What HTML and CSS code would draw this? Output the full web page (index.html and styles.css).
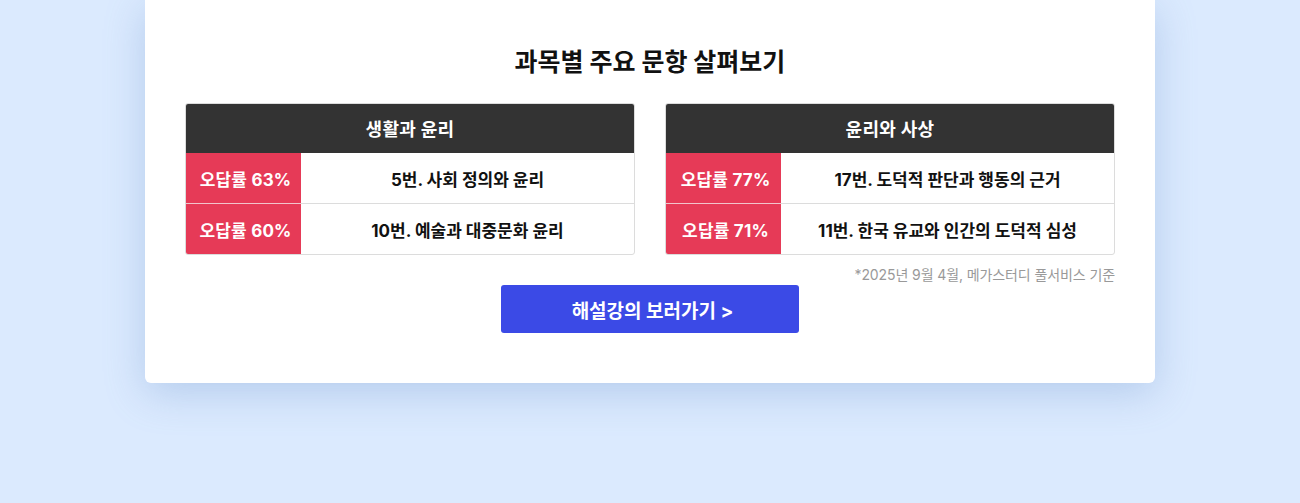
FILE: index.html
```html
<!DOCTYPE html>
<html lang="ko">
<head>
<meta charset="utf-8">
<link rel="stylesheet" href="styles.css">
</head>
<body>
<div class="page">
  <section class="card">
    <h2 class="title">과목별 주요 문항 살펴보기</h2>
    <div class="tables">
      <div class="table">
        <div class="thead">생활과 윤리</div>
        <div class="row">
          <div class="rate">오답률 63%</div>
          <div class="q">5번. 사회 정의와 윤리</div>
        </div>
        <div class="row">
          <div class="rate">오답률 60%</div>
          <div class="q">10번. 예술과 대중문화 윤리</div>
        </div>
      </div>
      <div class="table">
        <div class="thead">윤리와 사상</div>
        <div class="row">
          <div class="rate">오답률 77%</div>
          <div class="q">17번. 도덕적 판단과 행동의 근거</div>
        </div>
        <div class="row">
          <div class="rate">오답률 71%</div>
          <div class="q">11번. 한국 유교와 인간의 도덕적 심성</div>
        </div>
      </div>
    </div>
    <p class="note">*2025년 9월 4월, 메가스터디 풀서비스 기준</p>
    <div class="btn-wrap"><a class="btn" href="#">해설강의 보러가기 &gt;</a></div>
  </section>
</div>
</body>
</html>
```
FILE: styles.css
```css
* { box-sizing: border-box; }
html, body { margin: 0; padding: 0; }
body {
  background: #dbeafe;
  font-family: "Inter", "Noto Sans CJK KR", sans-serif;
  width: 1300px;
  height: 503px;
  overflow: hidden;
}
.page { display: flex; justify-content: center; }
.card {
  width: 1010px;
  background: #fff;
  border-radius: 0 0 6px 6px;
  box-shadow: 0 10px 40px rgba(100, 140, 200, 0.32);
  padding: 45px 40px 50px;
}
.title {
  margin: 0 0 24px;
  text-align: center;
  font-size: 25px;
  line-height: 34px;
  font-weight: 700;
  color: #111;
}
.tables { display: flex; gap: 30px; }
.table {
  flex: 1;
  border: 1px solid #dcdcdc;
  border-radius: 3px;
  overflow: hidden;
}
.thead {
  background: #333;
  color: #fff;
  display: flex;
  align-items: center;
  justify-content: center;
  font-size: 18px;
  font-weight: 700;
  margin: -1px -1px 0;
  height: 50px;
  letter-spacing: 0.3px;
}
.row { display: flex; height: 50px; }
.row + .row { border-top: 1px solid #dcdcdc; height: 51px; }
.row + .row .rate { box-shadow: 0 -1px 0 #f2c4cc; }
.rate {
  background: #e63a57;
  color: #fff;
  display: flex;
  align-items: center;
  justify-content: center;
  font-size: 17px;
  font-weight: 700;
  margin-left: -1px;
  width: 116px;
  padding-left: 5px;
  letter-spacing: 0.2px;
}
.q {
  flex: 1;
  display: flex;
  align-items: center;
  justify-content: center;
  font-size: 17px;
  font-weight: 700;
  color: #111;
}
.note {
  margin: 10px 0 0;
  text-align: right;
  font-size: 14px;
  line-height: 20px;
  color: #999;
  letter-spacing: -0.1px;
}
.btn-wrap { display: flex; justify-content: center; }
.btn {
  width: 298px;
  height: 48px;
  background: #3b4ae6;
  border-radius: 3px;
  color: #fff;
  text-decoration: none;
  display: flex;
  align-items: center;
  justify-content: center;
  font-size: 19px;
  font-weight: 700;
  padding-left: 5px;
}
```
